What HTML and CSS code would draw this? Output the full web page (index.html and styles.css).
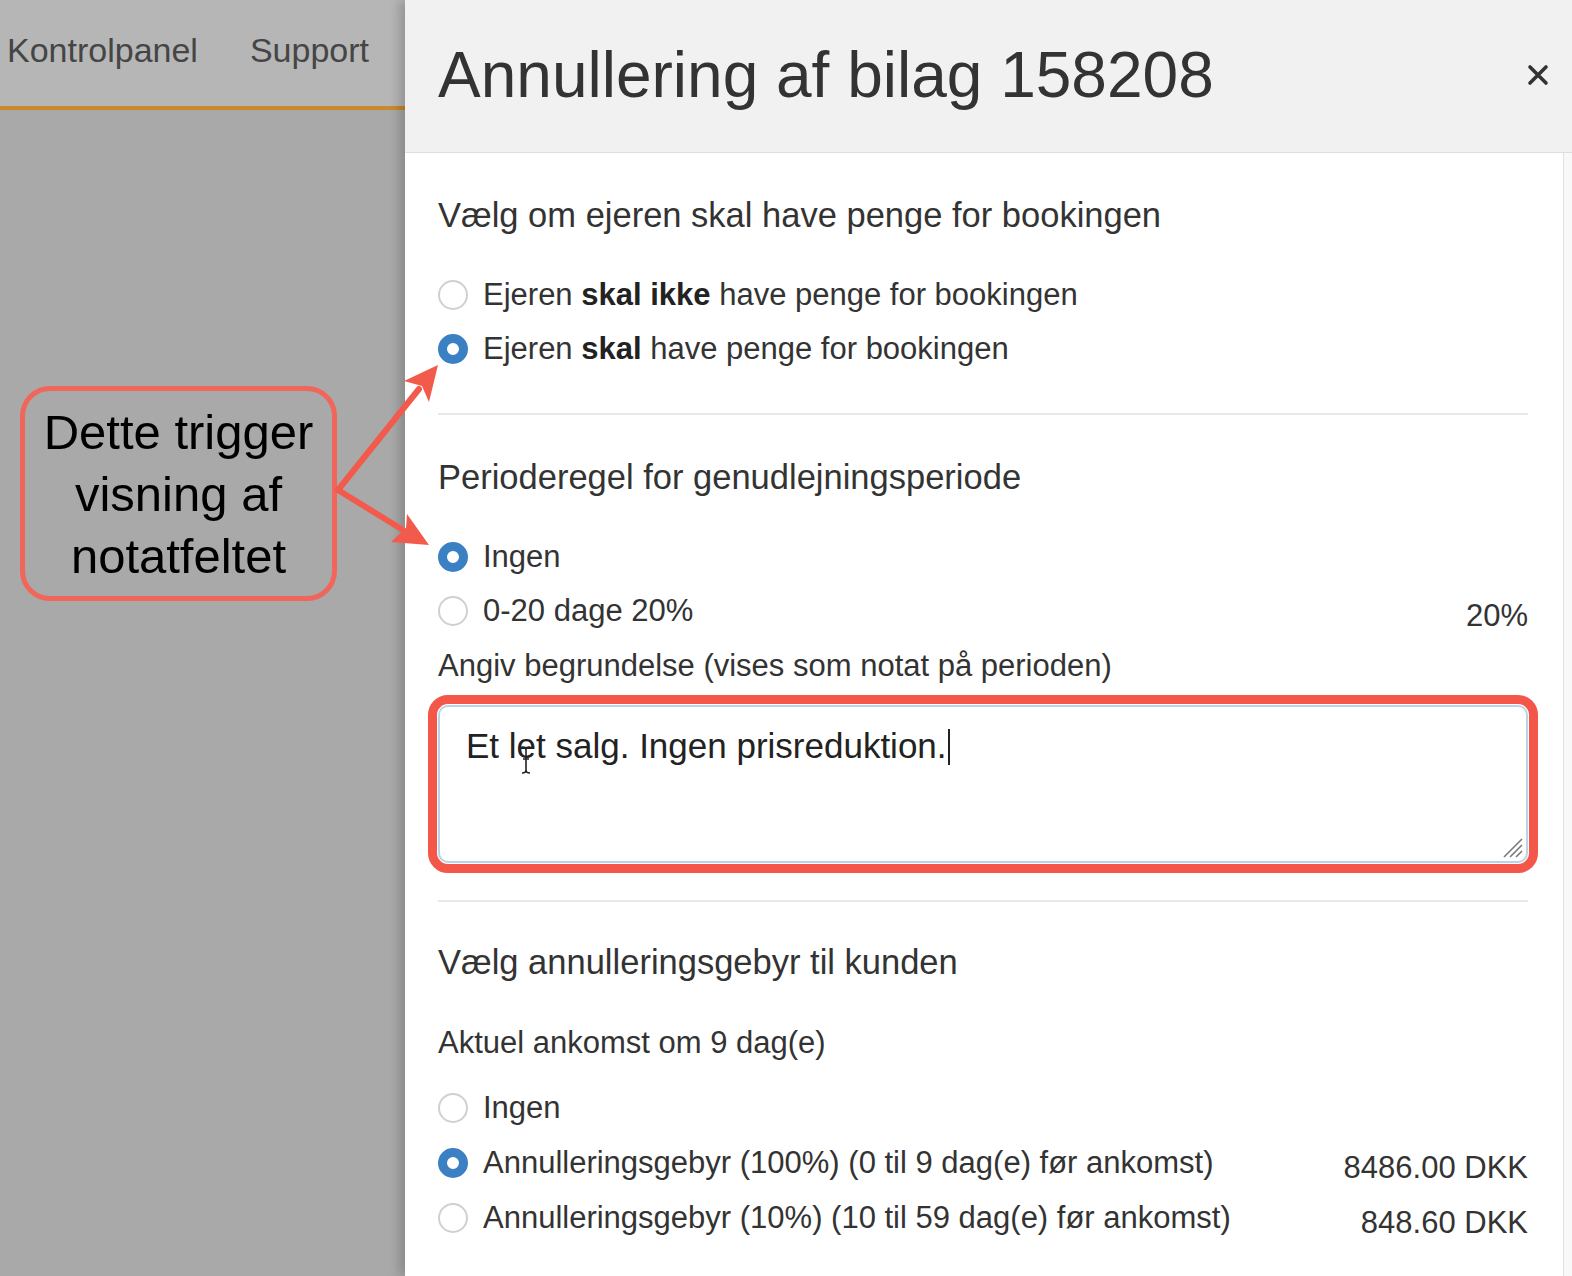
FILE: index.html
```html
<!DOCTYPE html>
<html lang="da">
<head>
  <meta charset="UTF-8">
  <meta name="viewport" content="width=device-width, initial-scale=1.0">
  <title>Annullering af bilag 158208</title>
  <link rel="stylesheet" href="styles.css">
</head>
<body>
  <div class="page">
      <aside class="backdrop">
          <nav class="topnav">
              <a href="#">Kontrolpanel</a>
              <a href="#">Support</a>
          </nav>
      </aside>

      <section class="panel">
          <header class="panel-header">
              <h1>Annullering af bilag 158208</h1>
              <button class="close" aria-label="Luk">
                  <svg width="22" height="22" viewBox="0 0 22 22">
                      <path d="M3 3 L19 19 M19 3 L3 19" stroke="#333" stroke-width="3.6" stroke-linecap="round"/>
                  </svg>
              </button>
          </header>

          <div class="panel-main">
              <div class="panel-body">
                  <section class="group">
                      <h2>Vælg om ejeren skal have penge for bookingen</h2>
                      <div class="options">
                          <label class="option">
                              <span class="choice"><input type="radio" name="owner"><span>Ejeren <b>skal ikke</b> have penge for bookingen</span></span>
                          </label>
                          <label class="option">
                              <span class="choice"><input type="radio" name="owner" checked><span>Ejeren <b>skal</b> have penge for bookingen</span></span>
                          </label>
                      </div>
                  </section>

                  <section class="group">
                      <h2>Perioderegel for genudlejningsperiode</h2>
                      <div class="options">
                          <label class="option">
                              <span class="choice"><input type="radio" name="period" checked><span>Ingen</span></span>
                          </label>
                          <label class="option">
                              <span class="choice"><input type="radio" name="period"><span>0-20 dage 20%</span></span>
                              <span class="amount">20%</span>
                          </label>
                      </div>
                      <p class="note-label">Angiv begrundelse (vises som notat på perioden)</p>
                      <div class="note-field">Et let salg. Ingen prisreduktion.<span class="caret"></span>
                          <svg class="ibeam" width="14" height="30" viewBox="0 0 14 30">
                              <path d="M3 2 Q7 2 7 5 Q7 2 11 2 M7 5 V25 M3 28 Q7 28 7 25 Q7 28 11 28 M4 14 H10" fill="none" stroke="#222" stroke-width="1.6"/>
                          </svg>
                          <svg class="grip" width="26" height="26" viewBox="0 0 26 26">
                              <path d="M24 6 L6 24 M24 12 L12 24 M24 18 L18 24" stroke="#7a7a7a" stroke-width="1.6"/>
                          </svg>
                      </div>
                  </section>

                  <section class="group group-fee">
                      <h2>Vælg annulleringsgebyr til kunden</h2>
                      <p class="sub">Aktuel ankomst om 9 dag(e)</p>
                      <div class="options options-fee">
                          <label class="option">
                              <span class="choice"><input type="radio" name="fee"><span>Ingen</span></span>
                          </label>
                          <label class="option">
                              <span class="choice"><input type="radio" name="fee" checked><span>Annulleringsgebyr (100%) (0 til 9 dag(e) før ankomst)</span></span>
                              <span class="amount">8486.00 DKK</span>
                          </label>
                          <label class="option">
                              <span class="choice"><input type="radio" name="fee"><span>Annulleringsgebyr (10%) (10 til 59 dag(e) før ankomst)</span></span>
                              <span class="amount">848.60 DKK</span>
                          </label>
                      </div>
                  </section>
              </div>
              <div class="scroll-track"></div>
          </div>
      </section>

      <!-- annotation drawn on top of the screenshot -->
      <div class="annotation">
          <div class="callout">Dette trigger<br>visning af<br>notatfeltet</div>
          <svg class="arrows" width="1572" height="1276" viewBox="0 0 1572 1276">
              <g stroke="#f25a4c" stroke-width="6" stroke-linecap="round">
                  <line x1="338" y1="490" x2="419" y2="389"/>
                  <line x1="338" y1="490" x2="403" y2="530"/>
              </g>
              <g fill="#f25a4c">
                  <polygon points="438,365 429,402 422,386 404,381"/>
                  <polygon points="429,545 391,542 406,528 407,514"/>
              </g>
          </svg>
      </div>
  </div>
</body>
</html>
```

FILE: styles.css
```css
body {
    margin: 0;
    font-family: 'Liberation Sans', Arial, sans-serif;
    color: #333;
}

.page {
    position: relative;
    display: flex;
    height: 1276px;
    overflow: hidden;
}

.backdrop {
    width: 405px;
    flex: none;
    background: #a9a9a9;
}

.topnav {
    height: 110px;
    box-sizing: border-box;
    padding: 0 0 6px 7px;
    display: flex;
    align-items: center;
    gap: 52px;
    background: #b6b6b6;
    border-bottom: 4px solid #c98a2b;
}

.topnav a {
    font-size: 34px;
    color: #454545;
    text-decoration: none;
}

.panel {
    flex: 1;
    display: flex;
    flex-direction: column;
    background: #fff;
    box-shadow: -6px 0 10px rgba(0, 0, 0, 0.18);
    z-index: 1;
}

.panel-header {
    flex: none;
    height: 153px;
    box-sizing: border-box;
    display: flex;
    align-items: center;
    justify-content: space-between;
    padding: 0 23px 2px 33px;
    background: #f1f1f1;
    border-bottom: 1px solid #dedede;
}

.panel-header h1 {
    margin: 0;
    font-size: 64px;
    font-weight: normal;
    color: #333;
    line-height: 1;
}

.close {
    border: none;
    background: none;
    padding: 0;
    cursor: pointer;
    display: flex;
}

.panel-main {
    flex: 1;
    display: flex;
}

.panel-body {
    flex: 1;
    padding: 0 35px 0 33px;
}

.scroll-track {
    width: 8px;
    background: #f8f8f8;
    border-left: 1px solid #e2e2e2;
}

.group {
    padding: 42px 0 37px;
    border-bottom: 2px solid #e8e8e8;
}

.group-fee {
    padding-top: 40px;
    border-bottom: none;
}

.group h2 {
    margin: 0;
    font-size: 34.5px;
    line-height: 40px;
    font-weight: normal;
    color: #333;
}

.options {
    margin-top: 33px;
}

.options-fee {
    margin-top: 21px;
}

.option {
    height: 54px;
    display: flex;
    align-items: center;
    justify-content: space-between;
    font-size: 31px;
    color: #333;
}

.options-fee .option + .option {
    height: 55px;
}

.choice {
    display: flex;
    align-items: center;
}

.choice b {
    color: #222;
}

input[type="radio"] {
    appearance: none;
    -webkit-appearance: none;
    width: 30px;
    height: 30px;
    margin: 0 15px 0 0;
    box-sizing: border-box;
    border: 2px solid #d0d0d0;
    border-radius: 50%;
    background: #fff;
    flex: none;
}

input[type="radio"]:checked {
    border: 9px solid #3a80c3;
}

.amount {
    font-size: 31px;
    margin-top: 10px;
    color: #333;
}

.note-label {
    margin: 11px 0 0;
    font-size: 31px;
    line-height: 34px;
}

.note-field {
    position: relative;
    margin-top: 22px;
    height: 158px;
    box-sizing: border-box;
    padding: 19px 26px;
    font-size: 35px;
    line-height: 40px;
    color: #222;
    border: 2px solid #bcd2e8;
    border-radius: 10px;
    outline: 9px solid #f4574a;
    outline-offset: 1px;
}

.caret {
    display: inline-block;
    width: 2px;
    height: 36px;
    margin-left: 1px;
    vertical-align: -7px;
    background: #222;
}

.ibeam {
    position: absolute;
    left: 79px;
    top: 38px;
}

.grip {
    position: absolute;
    right: 2px;
    bottom: 2px;
}

.sub {
    margin: 44px 0 0;
    font-size: 31px;
    line-height: 34px;
}

.annotation {
    position: absolute;
    inset: 0;
    pointer-events: none;
    z-index: 2;
}

.callout {
    position: absolute;
    left: 20px;
    top: 386px;
    width: 317px;
    height: 215px;
    box-sizing: border-box;
    border: 5px solid #f0665a;
    border-radius: 30px;
    display: flex;
    align-items: center;
    justify-content: center;
    text-align: center;
    font-size: 49px;
    line-height: 62px;
    color: #000;
}

.arrows {
    position: absolute;
    left: 0;
    top: 0;
}
```
